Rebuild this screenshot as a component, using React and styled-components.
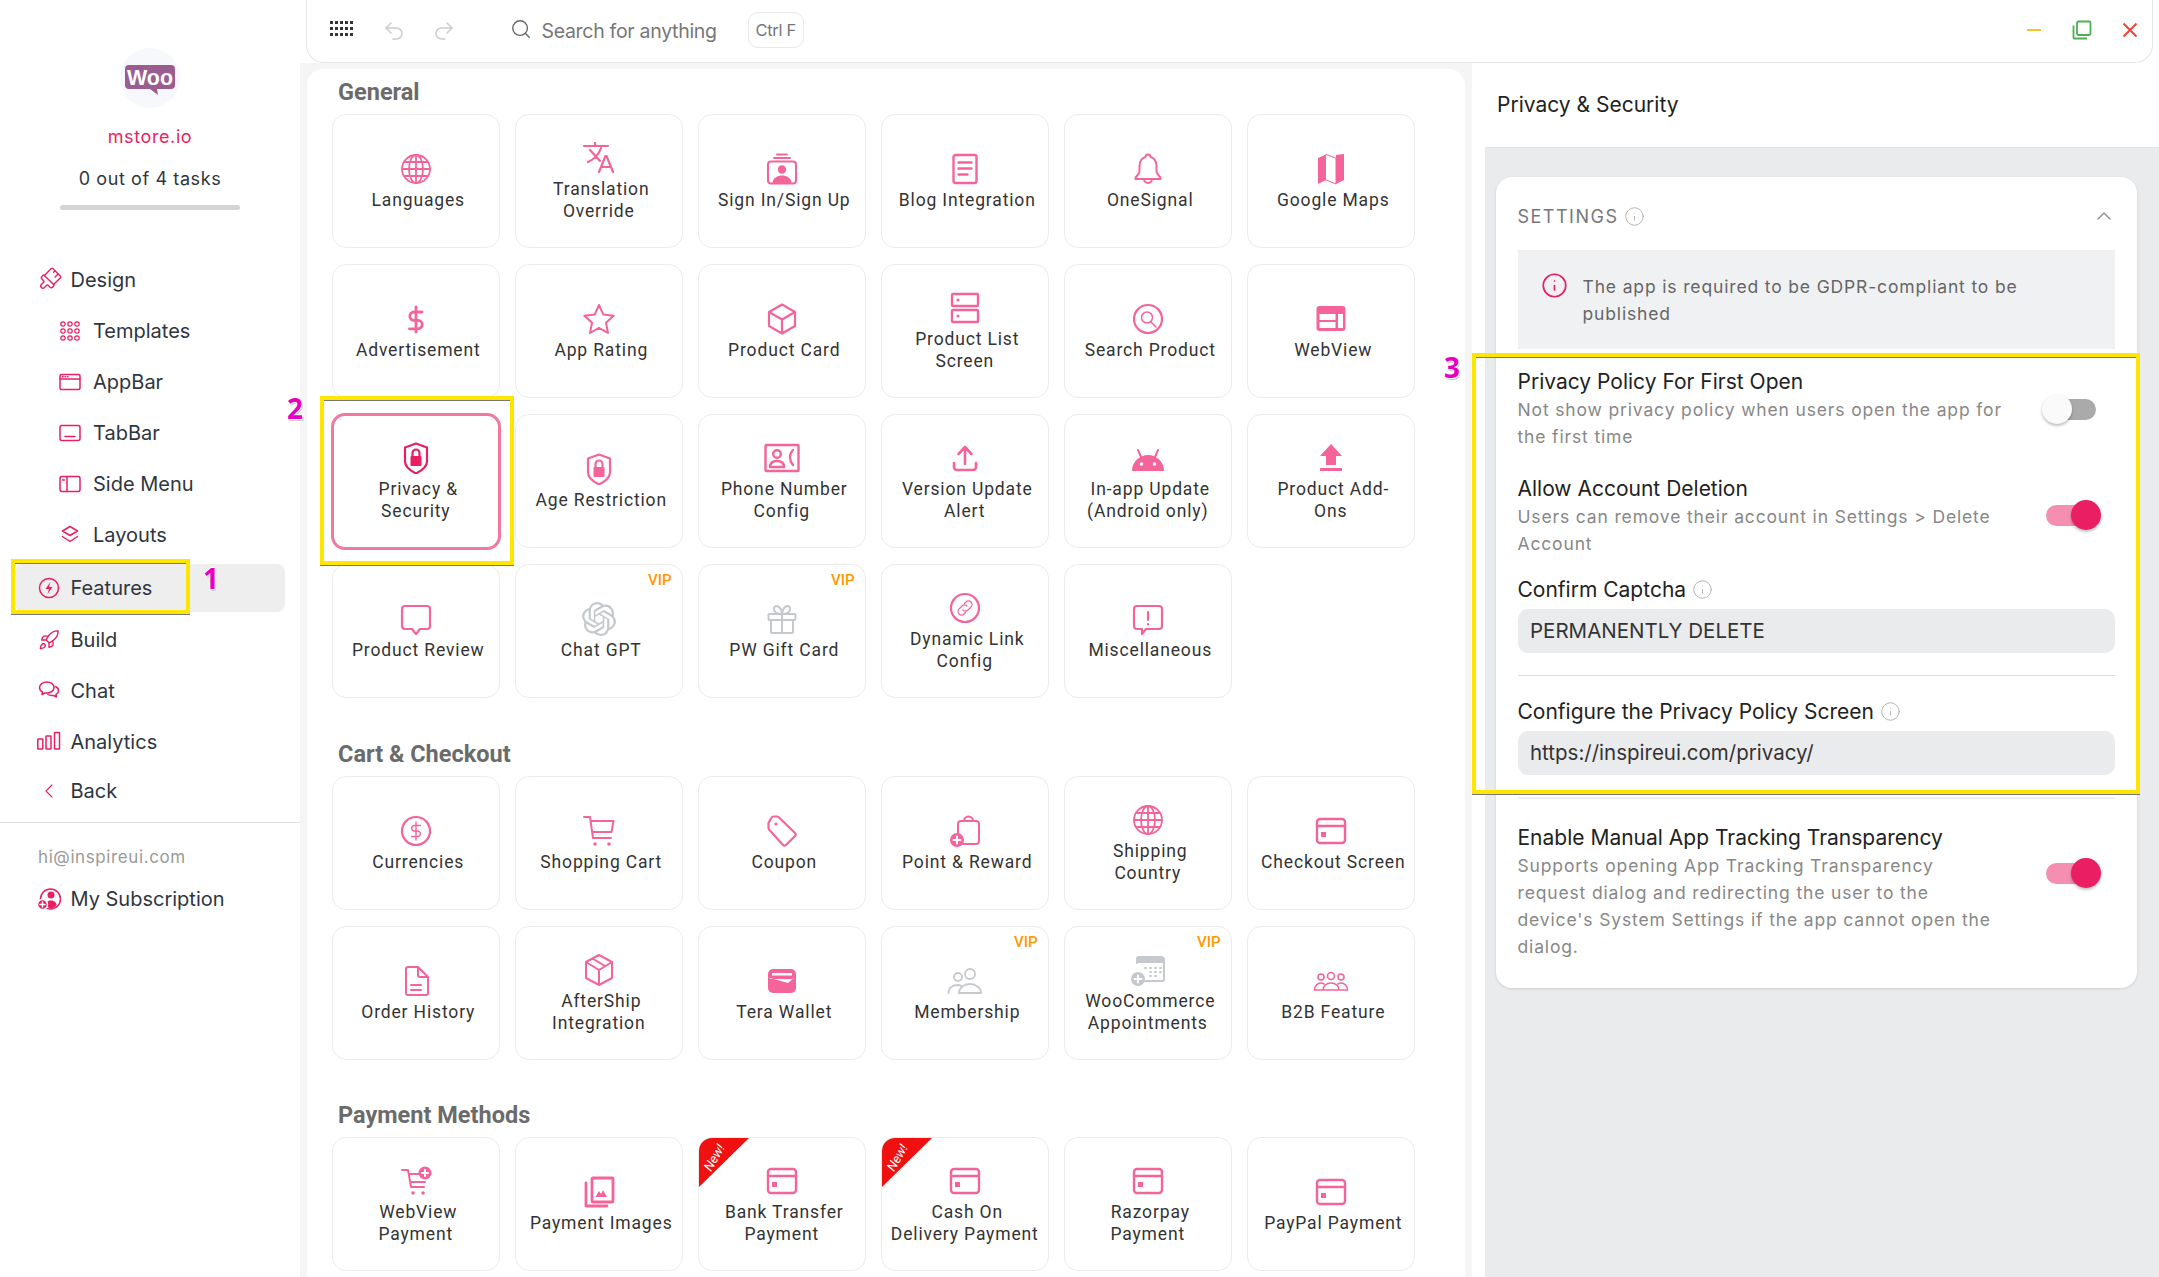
import React from "react";
import styled, { createGlobalStyle } from "styled-components";
import { ChevronLeft, ChevronUp, Info, PaintbrushVertical, Redo2, Rocket, Search, Undo2 } from "lucide-react";
import { SiOpenai } from "react-icons/si";

const GlobalStyle = createGlobalStyle`
  body {
    margin: 0;
    background: #fff;
    font-family: Inter, "Liberation Sans", sans-serif;
  }
`;

const Svg = ({ w = 32, h = 32, sw = 2, children }) => (
  <svg
    width={w}
    height={h}
    viewBox={`0 0 ${w} ${h}`}
    fill="none"
    stroke="currentColor"
    strokeWidth={sw}
    strokeLinecap="round"
    strokeLinejoin="round"
  >
    {children}
  </svg>
);

const F = { fill: "currentColor", stroke: "none" };
const W = { fill: "#fff", stroke: "none" };

const icons = {
  globe: (
    <Svg sw={1.8}>
      <circle cx="16" cy="16" r="14" />
      <ellipse cx="16" cy="16" rx="7" ry="14" />
      <path d="M16 2v28M2 16h28M4.5 9h23M4.5 23h23" />
    </Svg>
  ),
  translate: (
    <Svg sw={2.2}>
      <path d="M1 4h24M12 1v3M7 8l10 11M18 6c-2 6-6 11-13 14M16 30l6.5-16h1L30 30M18.5 25h9" />
    </Svg>
  ),
  signin: (
    <Svg>
      <path d="M11 1.5h10M8 5h16" />
      <rect x="2" y="8.5" width="28" height="22" rx="3" />
      <circle cx="16" cy="16.5" r="4.2" {...F} />
      <path d="M6.5 30c0-5 5-7.5 9.5-7.5s9.5 2.5 9.5 7.5z" {...F} />
    </Svg>
  ),
  blog: (
    <Svg sw={2.4}>
      <rect x="4.5" y="2" width="23" height="28" rx="2" />
      <path d="M9.5 9.5h13M9.5 15.5h13M9.5 21.5h9" />
    </Svg>
  ),
  bell: (
    <Svg sw={2}>
      <path d="M16 1.5a2.5 2.5 0 0 1 2.5 2.5c4 1.2 6 5 6 9v5c0 2.5 2 4.5 4 6.5v1.5h-25V24.500c2-2 4-4 4-6.500v-5c0-4 2-7.800 6-9A2.5 2.5 0 0 1 16 1.500zM12 26a4 4 0 0 0 8 0" />
    </Svg>
  ),
  map: (
    <Svg sw={1}>
      <path d="M3 5l8-3.5V27l-8 4zM21 2l8-1v26l-8 4z" {...F} />
      <path d="M11 1.5L21 5v26L11 27" />
    </Svg>
  ),
  dollar: (
    <Svg sw={2.8}>
      <path d="M16 4v25M22 9h-8a4.2 4.2 0 0 0 0 8.4h4a4.2 4.2 0 0 1 0 8.4H9.5" />
    </Svg>
  ),
  star: (
    <Svg sw={2}>
      <path d="M16 2l4.3 9.600 10.300 1.200-7.600 7L25 30l-9-5.200L7 30l2-10.200-7.600-7 10.300-1.200z" />
    </Svg>
  ),
  cube: (
    <Svg sw={2.2}>
      <path d="M16 1.5l13 7.5v14l-13 7.5L3 23V9zM3 9l13 7.5L29 9M16 16.5v14" />
    </Svg>
  ),
  list: (
    <Svg sw={2.4}>
      <rect x="3" y="2" width="26" height="12" rx="1" />
      <rect x="3" y="18" width="26" height="12" rx="1" />
      <circle cx="9" cy="8" r="1.6" {...F} />
      <circle cx="9" cy="24" r="1.6" {...F} />
    </Svg>
  ),
  searchCircle: (
    <Svg sw={2.2}>
      <circle cx="16" cy="16" r="14" />
      <circle cx="15" cy="14.5" r="5.5" strokeWidth="1.5" />
      <path d="M19 19l5 5" strokeWidth="1.5" />
    </Svg>
  ),
  webview: (
    <Svg>
      <rect x="1.5" y="3" width="29" height="25" rx="3" {...F} />
      <rect x="4.5" y="11" width="16" height="6" {...W} />
      <rect x="4.5" y="19" width="16" height="6" {...W} />
      <rect x="23" y="11" width="5" height="14" {...W} />
    </Svg>
  ),
  shield: (
    <Svg sw={2.2}>
      <path d="M16 1.5l11 4v14c0 5-5 9-11 12-6-3-11-7-11-12v-14z" />
      <path d="M12.5 14v-3a3.5 3.5 0 0 1 7 0v3" />
      <rect x="10.5" y="14" width="11" height="10" rx="1" {...F} />
    </Svg>
  ),
  phone: (
    <Svg w={36} sw={2.4}>
      <rect x="1.5" y="3" width="33" height="26" rx="1" />
      <circle cx="13" cy="12" r="3.8" />
      <path d="M6 25c0-4 3-6 7-6s7 2 7 6z" />
      <path d="M29 8c-4 4-4 10 0 15" />
    </Svg>
  ),
  upload: (
    <Svg sw={2.6}>
      <path d="M16 22V6M9.5 12L16 5l6.5 7M5 21v4a3 3 0 0 0 3 3h16a3 3 0 0 0 3-3v-4" />
    </Svg>
  ),
  android: (
    <Svg w={34} sw={2}>
      <path d="M1 29a16 16 0 0 1 32 0z" {...F} />
      <path d="M10 15L7 8M24 15l3-7" />
      <circle cx="10.5" cy="22" r="1.8" {...W} />
      <circle cx="23.5" cy="22" r="1.8" {...W} />
    </Svg>
  ),
  addon: (
    <Svg>
      <path d="M16 2l11 12h-6v9H11v-9H5z" {...F} />
      <rect x="5" y="26" width="22" height="3" {...F} />
    </Svg>
  ),
  bubble: (
    <Svg sw={2.2}>
      <path d="M5 3h22a3 3 0 0 1 3 3v17a3 3 0 0 1-3 3h-7l-4 5-4-5H5a3 3 0 0 1-3-3V6a3 3 0 0 1 3-3z" />
    </Svg>
  ),
  misc: (
    <Svg sw={2.2}>
      <path d="M5 3h22a3 3 0 0 1 3 3v17a3 3 0 0 1-3 3H14l-4 5v-5H5a3 3 0 0 1-3-3V6a3 3 0 0 1 3-3z" />
      <path d="M16 9v8M16 21v.5" />
    </Svg>
  ),
  gpt: <SiOpenai size={34} />,
  gift: (
    <Svg sw={2}>
      <rect x="2.5" y="11" width="27" height="6" rx="1" />
      <rect x="5" y="17" width="22" height="13" rx="1" />
      <path d="M16 11v19M16 11c-3 0-8-1-8-5 0-5 7-4 8 5 1-9 8-10 8-5 0 4-5 5-8 5z" />
    </Svg>
  ),
  link: (
    <Svg sw={2.2}>
      <circle cx="16" cy="16" r="14" />
      <path
        d="M14 18a3.5 3.5 0 0 0 5 0l3-3a3.5 3.5 0 0 0-5-5l-1.5 1.5M18 14a3.5 3.5 0 0 0-5 0l-3 3a3.5 3.5 0 0 0 5 5l1.5-1.5"
        strokeWidth="1.2"
      />
    </Svg>
  ),
  currency: (
    <Svg sw={2.2}>
      <circle cx="16" cy="16" r="14" />
      <path d="M16 7v18M20.5 10.5H14a2.8 2.8 0 0 0 0 5.5h4a2.8 2.8 0 0 1 0 5.5h-6.5" strokeWidth="1.4" />
    </Svg>
  ),
  cart: (
    <Svg sw={2}>
      <path d="M1 2h6l3 21h18M7.5 6h23l-2 11H9.5" />
      <circle cx="12" cy="29" r="1.8" {...F} />
      <circle cx="26" cy="29" r="1.8" {...F} />
    </Svg>
  ),
  tag: (
    <Svg sw={2.2}>
      <path d="M5 3.5a3 3 0 0 1 3-2h3a3 3 0 0 1 2 1L29 18a2 2 0 0 1 0 3l-9 9a2 2 0 0 1-3 0L3.5 15a3 3 0 0 1-1-2V8z" />
      <circle cx="10" cy="9" r="1.6" {...F} />
    </Svg>
  ),
  bag: (
    <Svg sw={2}>
      <path d="M9 23V9a3 3 0 0 1 3-3h15a3 3 0 0 1 3 3v17a3 3 0 0 1-3 3H14M15 6a4.5 4.5 0 0 1 9 0" />
      <circle cx="8" cy="25" r="7" {...F} />
      <path d="M8 21.5v7M4.5 25h7" stroke="#fff" />
    </Svg>
  ),
  card: (
    <Svg sw={2.4}>
      <rect x="2" y="4" width="28" height="24" rx="3" />
      <path d="M2 11h28" />
      <rect x="6" y="17" width="5" height="5" {...F} />
    </Svg>
  ),
  doc: (
    <Svg sw={2}>
      <path d="M6 4a2 2 0 0 1 2-2h10l10 10v16a2 2 0 0 1-2 2H8a2 2 0 0 1-2-2zM18 2v8a2 2 0 0 0 2 2h8M11 20h10M11 25h10" />
    </Svg>
  ),
  parcel: (
    <Svg sw={2}>
      <path d="M16 1l13 7v16l-13 7-13-7V8zM3 8l13 8 13-8M16 16v15M9.5 4.5L22 12" />
    </Svg>
  ),
  wallet: (
    <Svg>
      <rect x="2" y="4" width="28" height="24" rx="5" {...F} />
      <path d="M6 8h20v2.5H6zM4 13l18 5 6-5v1H4z" {...W} />
    </Svg>
  ),
  members: (
    <Svg w={36} sw={1.8}>
      <circle cx="11" cy="12" r="4" />
      <circle cx="23" cy="9" r="5" />
      <path d="M1.5 28c0-5 4-8 9-8 1.5 0 3 .5 4 1M12 28c0-5 5-9 11-9s11 4 11 9z" />
    </Svg>
  ),
  calendar: (
    <Svg w={36} sw={2}>
      <path d="M8 3h24a3 3 0 0 1 3 3v3H6V5z" {...F} />
      <path d="M7 9V5a2 2 0 0 1 2-2h22a3 3 0 0 1 3 3v19a2 2 0 0 1-2 2H14" />
      <path d="M15 14h1M20 14h1M25 14h1M30 14h1M20 18h1M25 18h1M30 18h1M20 22h1M25 22h1" />
      <circle cx="8" cy="25" r="7" {...F} />
      <path d="M8 21.5v7M4.5 25h7" stroke="#fff" />
    </Svg>
  ),
  b2b: (
    <Svg w={36} sw={1.6}>
      <circle cx="8" cy="12" r="3" />
      <circle cx="18" cy="11" r="3.5" />
      <circle cx="28" cy="12" r="3" />
      <path d="M1.5 25c0-4 3-7 6.5-7 1 0 2 .3 3 1M34.5 25c0-4-3-7-6.5-7-1 0-2 .3-3 1M10 25c0-4 3.5-7 8-7s8 3 8 7zM1.5 25H10M26 25h8.5" />
    </Svg>
  ),
  webCart: (
    <Svg sw={2}>
      <path d="M2 5h6l3 17h13M9 9h14M11 17h14" />
      <circle cx="13" cy="28" r="1.8" {...F} />
      <circle cx="23" cy="28" r="1.8" {...F} />
      <circle cx="25" cy="8" r="6.5" {...F} />
      <path d="M25 5v6M22 8h6" stroke="#fff" />
    </Svg>
  ),
  images: (
    <Svg sw={2.8}>
      <rect x="9" y="2" width="21" height="24" rx="1" />
      <path d="M3 7v23h21" />
      <path d="M12.5 21l3.5-6 2 3 2-4 4 7z" {...F} />
    </Svg>
  ),
};

const sections = [
  {
    title: "General",
    items: [
      { label: "Languages", icon: "globe" },
      { label: "Translation\nOverride", icon: "translate" },
      { label: "Sign In/Sign Up", icon: "signin" },
      { label: "Blog Integration", icon: "blog" },
      { label: "OneSignal", icon: "bell" },
      { label: "Google Maps", icon: "map" },
      { label: "Advertisement", icon: "dollar" },
      { label: "App Rating", icon: "star" },
      { label: "Product Card", icon: "cube" },
      { label: "Product List\nScreen", icon: "list" },
      { label: "Search Product", icon: "searchCircle" },
      { label: "WebView", icon: "webview" },
      { label: "Privacy &\nSecurity", icon: "shield", selected: true },
      { label: "Age Restriction", icon: "shield" },
      { label: "Phone Number\nConfig", icon: "phone" },
      { label: "Version Update\nAlert", icon: "upload" },
      { label: "In-app Update\n(Android only)", icon: "android" },
      { label: "Product Add-\nOns", icon: "addon" },
      { label: "Product Review", icon: "bubble" },
      { label: "Chat GPT", icon: "gpt", vip: true },
      { label: "PW Gift Card", icon: "gift", vip: true },
      { label: "Dynamic Link\nConfig", icon: "link" },
      { label: "Miscellaneous", icon: "misc" },
    ],
  },
  {
    title: "Cart & Checkout",
    items: [
      { label: "Currencies", icon: "currency" },
      { label: "Shopping Cart", icon: "cart" },
      { label: "Coupon", icon: "tag" },
      { label: "Point & Reward", icon: "bag" },
      { label: "Shipping\nCountry", icon: "globe" },
      { label: "Checkout Screen", icon: "card" },
      { label: "Order History", icon: "doc" },
      { label: "AfterShip\nIntegration", icon: "parcel" },
      { label: "Tera Wallet", icon: "wallet" },
      { label: "Membership", icon: "members", vip: true },
      { label: "WooCommerce\nAppointments", icon: "calendar", vip: true },
      { label: "B2B Feature", icon: "b2b" },
    ],
  },
  {
    title: "Payment Methods",
    items: [
      { label: "WebView\nPayment", icon: "webCart" },
      { label: "Payment Images", icon: "images" },
      { label: "Bank Transfer\nPayment", icon: "card", isNew: true },
      { label: "Cash On\nDelivery Payment", icon: "card", isNew: true },
      { label: "Razorpay\nPayment", icon: "card" },
      { label: "PayPal Payment", icon: "card" },
    ],
  },
];

const NavSvg = ({ children }) => (
  <svg width="24" height="24" viewBox="0 0 24 24" fill="none" stroke="currentColor" strokeWidth="1.5" strokeLinecap="round" strokeLinejoin="round">
    {children}
  </svg>
);

function BrushIcon() {
  return (
    <BrushTilt>
      <PaintbrushVertical size={26} strokeWidth={1.3} />
    </BrushTilt>
  );
}

const navItems = [
  { label: "Design", icon: <BrushIcon /> },
  {
    label: "Templates",
    sub: true,
    icon: (
      <NavSvg>
        {[5, 12, 19].map((y) =>
          [5, 12, 19].map((x) => <circle key={`${x}-${y}`} cx={x} cy={y} r="2.2" strokeWidth="1.2" />)
        )}
      </NavSvg>
    ),
  },
  {
    label: "AppBar",
    sub: true,
    icon: (
      <NavSvg>
        <rect x="2" y="4.5" width="20" height="15" rx="1.5" />
        <path d="M2 9h20M4.5 6.8h.5M7 6.8h.5M9.5 6.8h.5" />
      </NavSvg>
    ),
  },
  {
    label: "TabBar",
    sub: true,
    icon: (
      <NavSvg>
        <rect x="2" y="4.5" width="20" height="15" rx="2" />
        <path d="M7 15.5h10" />
      </NavSvg>
    ),
  },
  {
    label: "Side Menu",
    sub: true,
    icon: (
      <NavSvg>
        <rect x="2" y="4.5" width="20" height="15" rx="2" />
        <path d="M9 4.5v15M4.5 8h2" />
      </NavSvg>
    ),
  },
  {
    label: "Layouts",
    sub: true,
    icon: (
      <NavSvg>
        <path d="M12 3.5l7.5 4.5-7.5 4.5L4.5 8zM4.5 13.5l7.5 5 7.5-5" />
      </NavSvg>
    ),
  },
  {
    label: "Features",
    active: true,
    top: 4,
    icon: (
      <NavSvg>
        <circle cx="12" cy="12" r="9.5" />
        <path d="M13.5 6l-5 7h3.5l-1.5 5 5-7h-3.5z" fill="currentColor" stroke="none" />
      </NavSvg>
    ),
  },
  { label: "Build", icon: <Rocket size={22} strokeWidth={1.5} /> },
  {
    label: "Chat",
    icon: (
      <NavSvg>
        <path d="M10 3c4 0 7 2.5 7 5.5S14 14 10 14H8l-3 1.5.5-2.5C3.500 12 2.500 10.500 2.500 8.500 2.500 5.500 6 3 10 3zM18.500 7.500c2 1 3 2.500 3 4 0 1.500-.7 3-2.500 4l.5 2.500-3-1.500h-2c-1.500 0-2.500-.3-3.500-1" />
      </NavSvg>
    ),
  },
  {
    label: "Analytics",
    icon: (
      <NavSvg>
        <rect x="0.8" y="9" width="5" height="10" rx="0.5" />
        <rect x="9" y="6" width="5" height="13" rx="0.5" />
        <rect x="17.5" y="2.5" width="5" height="16.5" rx="0.5" />
      </NavSvg>
    ),
  },
  { label: "Back", height: 47, icon: <ChevronLeft size={34} strokeWidth={1.1} /> },
];

const toggleRows = [
  {
    title: "Privacy Policy For First Open",
    desc: "Not show privacy policy when users open the app for\nthe first time",
    on: false,
    offset: 25,
  },
  {
    title: "Allow Account Deletion",
    desc: "Users can remove their account in Settings > Delete\nAccount",
    on: true,
    offset: 24,
  },
];

const Tile = ({ item }) => (
  <Card $selected={item.selected}>
    {item.vip && <Vip>VIP</Vip>}
    {item.isNew && (
      <Ribbon>
        <RibbonText>New!</RibbonText>
      </Ribbon>
    )}
    <TileIcon $tone={item.selected ? "strong" : item.vip ? "muted" : "soft"}>{icons[item.icon]}</TileIcon>
    <TileLabel>{item.label}</TileLabel>
  </Card>
);

const ToggleRow = ({ row }) => (
  <Row>
    <div>
      <FieldTitle>{row.title}</FieldTitle>
      <FieldDesc>{row.desc}</FieldDesc>
    </div>
    <Toggle $on={row.on} $offset={row.offset}>
      <Thumb $on={row.on} />
    </Toggle>
  </Row>
);

const App = () => {
  return (
    <Page>
      <GlobalStyle />
      <Sidebar>
        <LogoCircle>
          <svg width="50" height="30" viewBox="0 0 50 30">
            <path d="M4 0h42a4 4 0 0 1 4 4v16a4 4 0 0 1-4 4H32l1 6-8-6H4a4 4 0 0 1-4-4V4a4 4 0 0 1 4-4z" fill="#9b5c8f" />
            <text x="25" y="20" textAnchor="middle" fontFamily="Liberation Sans" fontWeight="700" fontSize="22" fill="#fff" textLength="46" lengthAdjust="spacingAndGlyphs">
              Woo
            </text>
          </svg>
        </LogoCircle>
        <StoreName>mstore.io</StoreName>
        <Tasks>0 out of 4 tasks</Tasks>
        <Progress />
        <Nav>
          {navItems.map((item) => (
            <NavRow key={item.label} $sub={item.sub} $active={item.active} $top={item.top} $height={item.height}>
              <NavIcon>{item.icon}</NavIcon>
              {item.label}
            </NavRow>
          ))}
        </Nav>
        <SideDivider />
        <Email>hi@inspireui.com</Email>
        <NavRow>
          <NavIcon>
            <NavSvg>
              <circle cx="13.5" cy="12" r="10" />
              <circle cx="14" cy="8" r="3.5" fill="currentColor" stroke="none" />
              <path d="M8.5 19c0-3.500 2.500-5.500 5.500-5.500s5.500 2 5.500 4.500c-1.500 1.800-3.500 3.500-6 3.500z" fill="currentColor" stroke="none" />
              <circle cx="5.5" cy="17.5" r="5" fill="currentColor" stroke="#fff" />
              <path d="M5.5 15v5M3 17.5h5" stroke="#fff" />
            </NavSvg>
          </NavIcon>
          My Subscription
        </NavRow>
      </Sidebar>

      <Column>
        <Topbar>
          <AppsGrid>
            {Array.from({ length: 15 }, (_, i) => (
              <AppsDot key={i} />
            ))}
          </AppsGrid>
          <HistoryButton $left={29}>
            <Undo2 size={24} strokeWidth={1.5} />
          </HistoryButton>
          <HistoryButton $left={26}>
            <Redo2 size={24} strokeWidth={1.5} />
          </HistoryButton>
          <SearchIcon>
            <Search size={22} strokeWidth={1.5} />
          </SearchIcon>
          <SearchText>Search for anything</SearchText>
          <Shortcut>Ctrl F</Shortcut>
          <WindowControls>
            <WindowButton $color="#fbc02d">
              <svg width="16" height="16" viewBox="0 0 16 16" fill="none" stroke="currentColor" strokeWidth="2">
                <path d="M1 8h14" />
              </svg>
            </WindowButton>
            <WindowButton $color="#4caf50">
              <svg width="20" height="20" viewBox="0 0 20 20" fill="none" stroke="currentColor" strokeWidth="1.8">
                <rect x="5" y="1.5" width="13.5" height="13.5" rx="1.5" />
                <path d="M1.5 5.5v12a1 1 0 0 0 1 1H15" />
              </svg>
            </WindowButton>
            <WindowButton $color="#f44336">
              <svg width="16" height="16" viewBox="0 0 16 16" fill="none" stroke="currentColor" strokeWidth="2">
                <path d="M1.5 1.5l13 13M14.5 1.5l-13 13" />
              </svg>
            </WindowButton>
          </WindowControls>
        </Topbar>

        <Workspace>
          <MainPanel>
            {sections.map((section, i) => (
              <Section key={section.title} $first={i === 0}>
                <SectionTitle>{section.title}</SectionTitle>
                <TileGrid>
                  {section.items.map((item) => (
                    <Tile key={item.label} item={item} />
                  ))}
                </TileGrid>
              </Section>
            ))}
          </MainPanel>

          <DetailPanel>
            <DetailHeader>Privacy &amp; Security</DetailHeader>
            <DetailBody>
              <SettingsCard>
                <SettingsHead>
                  <SettingsTitle>SETTINGS</SettingsTitle>
                  <InfoMark>
                    <Info size={21} strokeWidth={1} />
                  </InfoMark>
                  <Collapse>
                    <ChevronUp size={24} strokeWidth={1.3} />
                  </Collapse>
                </SettingsHead>
                <Notice>
                  <NoticeIcon>
                    <Info size={27} strokeWidth={1.5} />
                  </NoticeIcon>
                  <NoticeText>The app is required to be GDPR-compliant to be{"\n"}published</NoticeText>
                </Notice>
                <ToggleList>
                  {toggleRows.map((row) => (
                    <ToggleRow key={row.title} row={row} />
                  ))}
                </ToggleList>
                <FieldLabel $top={18.5}>
                  Confirm Captcha
                  <InfoMark>
                    <Info size={21} strokeWidth={1} />
                  </InfoMark>
                </FieldLabel>
                <InputBox>PERMANENTLY DELETE</InputBox>
                <Rule />
                <FieldLabel $top={22}>
                  Configure the Privacy Policy Screen
                  <InfoMark>
                    <Info size={21} strokeWidth={1} />
                  </InfoMark>
                </FieldLabel>
                <InputBox>https://inspireui.com/privacy/</InputBox>
                <Rule $thick />
                <LastRow>
                  <ToggleRow
                    row={{
                      title: "Enable Manual App Tracking Transparency",
                      desc: "Supports opening App Tracking Transparency\nrequest dialog and redirecting the user to the\ndevice's System Settings if the app cannot open the\ndialog.",
                      on: true,
                      offset: 33,
                    }}
                  />
                </LastRow>
              </SettingsCard>
            </DetailBody>
          </DetailPanel>
        </Workspace>
      </Column>

      <Highlight $x={11} $y={559} $w={179} $h={55} />
      <Highlight $x={320} $y={396} $w={194} $h={169} />
      <Highlight $x={1472} $y={353} $w={668} $h={441} />
      <Marker $x={203} $y={559}>1</Marker>
      <Marker $x={287} $y={389}>2</Marker>
      <Marker $x={1444} $y={348}>3</Marker>
    </Page>
  );
};

export default App;

const BrushTilt = styled.span`
  display: flex;
  transform: rotate(45deg);
`;

const Page = styled.div`
  position: relative;
  display: flex;
  width: 2159px;
  height: 1277px;
  overflow: hidden;
  background: #fff;
`;

const Sidebar = styled.aside`
  flex: none;
  width: 300px;
  padding-top: 48px;
  box-sizing: border-box;
  color: #2f3640;
`;

const LogoCircle = styled.div`
  width: 60px;
  height: 60px;
  margin: 0 auto;
  padding-top: 17px;
  box-sizing: border-box;
  border-radius: 50%;
  background: #f7f8fc;
  display: flex;
  justify-content: center;
`;

const StoreName = styled.div`
  margin-top: 16px;
  height: 26px;
  line-height: 26px;
  text-align: center;
  font-size: 18px;
  letter-spacing: 0.6px;
  color: #e91e63;
`;

const Tasks = styled.div`
  margin-top: 16px;
  height: 26px;
  line-height: 26px;
  text-align: center;
  font-size: 18px;
  letter-spacing: 0.6px;
`;

const Progress = styled.div`
  width: 180px;
  height: 5px;
  margin: 13px auto 0;
  border-radius: 3px;
  background: #d4d4d4;
`;

const Nav = styled.nav`
  margin-top: 44px;
`;

const NavRow = styled.div`
  display: flex;
  align-items: center;
  height: ${(p) => (p.$active ? 48 : p.$height || 51)}px;
  margin: ${(p) => p.$top || 0}px 15px ${(p) => (p.$active ? 2 : 0)}px;
  padding-left: ${(p) => (p.$sub ? 43 : 22)}px;
  gap: ${(p) => (p.$sub ? 11 : 9.5)}px;
  border-radius: 8px;
  background: ${(p) => (p.$active ? "#eeeeee" : "transparent")};
  font-size: 20px;
  color: #2f3640;
`;

const NavIcon = styled.span`
  display: flex;
  justify-content: center;
  width: 24px;
  color: #e91e63;
`;

const SideDivider = styled.div`
  height: 1px;
  margin-top: 8px;
  background: #e2e2e2;
`;

const Email = styled.div`
  margin: 22px 0 4px 38px;
  height: 24px;
  line-height: 24px;
  font-size: 17px;
  letter-spacing: 0.6px;
  color: #9a9a9a;
`;

const Column = styled.div`
  flex: 1;
  display: flex;
  flex-direction: column;
  min-width: 0;
`;

const Topbar = styled.header`
  flex: none;
  display: flex;
  align-items: center;
  height: 63px;
  margin: 0 6px;
  padding-left: 23px;
  box-sizing: border-box;
  background: #fff;
  border: 1px solid #e6e6e6;
  border-top: none;
  border-radius: 0 0 18px 18px;
`;

const AppsGrid = styled.div`
  display: grid;
  grid-template-columns: repeat(5, 3px);
  grid-auto-rows: 3px;
  gap: 3px 2px;
  margin-top: -5px;
`;

const AppsDot = styled.span`
  background: #333;
`;

const HistoryButton = styled.span`
  display: flex;
  margin-left: ${(p) => p.$left}px;
  color: #ccc;
`;

const SearchIcon = styled.span`
  display: flex;
  margin-left: 53.5px;
  margin-top: -5px;
  color: #666;
`;

const SearchText = styled.span`
  margin-left: 10px;
  font-size: 19.5px;
  letter-spacing: -0.3px;
  color: #777;
`;

const Shortcut = styled.span`
  margin-left: 31px;
  width: 56px;
  height: 36px;
  line-height: 34px;
  margin-top: -3px;
  box-sizing: border-box;
  text-align: center;
  border: 1px solid #e8e8e8;
  border-radius: 10px;
  font-size: 16.5px;
  letter-spacing: -0.3px;
  color: #777;
`;

const WindowControls = styled.div`
  display: flex;
  align-items: center;
  gap: 30px;
  margin-left: auto;
  margin-right: 14px;
  margin-top: -3px;
`;

const WindowButton = styled.span`
  display: flex;
  color: ${(p) => p.$color};
`;

const Workspace = styled.div`
  flex: 1;
  display: flex;
  min-height: 0;
  background: #f5f5f5;
`;

const MainPanel = styled.main`
  flex: none;
  width: 1158px;
  margin: 6px 7px 0;
  padding: 11px 0 0 25px;
  box-sizing: border-box;
  background: #fff;
  border-radius: 16px 16px 0 0;
`;

const Section = styled.section`
  margin-top: ${(p) => (p.$first ? 0 : 43.5)}px;
`;

const SectionTitle = styled.h2`
  margin: 0 0 10px 6px;
  height: 24px;
  line-height: 24px;
  font-family: Roboto, sans-serif;
  font-size: 23.5px;
  font-weight: 700;
  color: #6b6b6b;
`;

const TileGrid = styled.div`
  display: grid;
  grid-template-columns: repeat(6, 167.5px);
  grid-auto-rows: 134px;
  gap: 16px 15.5px;
`;

const Card = styled.div`
  position: relative;
  display: flex;
  flex-direction: column;
  align-items: center;
  justify-content: center;
  padding-top: 3px;
  box-sizing: border-box;
  overflow: hidden;
  background: #fff;
  margin: ${(p) => (p.$selected ? "-1.5px" : "0")};
  border: ${(p) => (p.$selected ? "3px solid #f2789f" : "1px solid #ececec")};
  border-radius: 14px;
`;

const Vip = styled.span`
  position: absolute;
  top: 6px;
  right: 10px;
  font-family: Roboto, sans-serif;
  font-size: 15px;
  font-weight: 500;
  color: #ff9800;
`;

const Ribbon = styled.div`
  position: absolute;
  top: 0;
  left: 0;
  width: 50px;
  height: 49px;
  background: #f01010;
  clip-path: polygon(0 0, 100% 0, 0 100%);
`;

const RibbonText = styled.span`
  position: absolute;
  top: 12px;
  left: 1px;
  transform: rotate(-60deg);
  font-family: Roboto, sans-serif;
  font-size: 13px;
  font-style: italic;
  color: #fff;
`;

const TileIcon = styled.div`
  display: flex;
  align-items: center;
  justify-content: center;
  height: 30px;
  margin-bottom: 5px;
  color: ${(p) => (p.$tone === "strong" ? "#e91e63" : p.$tone === "muted" ? "#c5c8cc" : "#f4649a")};
`;

const TileLabel = styled.div`
  width: 100%;
  text-align: center;
  white-space: pre-line;
  text-indent: 5px;
  font-family: Roboto, sans-serif;
  font-size: 17.5px;
  line-height: 22px;
  letter-spacing: 0.85px;
  color: #333;
`;

const DetailPanel = styled.aside`
  flex: none;
  width: 687px;
  display: flex;
  flex-direction: column;
  background: #fff;
`;

const DetailHeader = styled.div`
  flex: none;
  height: 84px;
  line-height: 84px;
  padding-left: 25px;
  font-size: 21px;
  color: #222;
`;

const DetailBody = styled.div`
  flex: 1;
  margin-left: 13px;
  padding: 28.5px 0 0 10.5px;
  background: #eaebed;
  border-top: 1px solid #e2e3e5;
`;

const SettingsCard = styled.div`
  width: 641.5px;
  height: 811.5px;
  padding: 0 22px;
  box-sizing: border-box;
  background: #fff;
  border-radius: 16px;
  box-shadow: 0 1px 3px rgba(0, 0, 0, 0.12);
`;

const SettingsHead = styled.div`
  display: flex;
  align-items: center;
  height: 73.5px;
  padding-top: 6px;
  box-sizing: border-box;
`;

const SettingsTitle = styled.span`
  font-size: 18px;
  letter-spacing: 1.5px;
  color: #777;
`;

const InfoMark = styled.span`
  display: flex;
  margin-left: 6px;
  color: #aaa;
`;

const Collapse = styled.span`
  display: flex;
  margin-left: auto;
  margin-right: -1px;
  color: #888;
`;

const Notice = styled.div`
  display: flex;
  height: 99px;
  padding: 22px 0 0 23px;
  box-sizing: border-box;
  background: #f0f1f3;
`;

const NoticeIcon = styled.span`
  display: flex;
  height: 27px;
  color: #e91e63;
`;

const NoticeText = styled.div`
  margin: 1px 0 0 15px;
  white-space: pre-line;
  font-size: 17.5px;
  line-height: 27px;
  letter-spacing: 0.85px;
  color: #666;
`;

const ToggleList = styled.div`
  display: flex;
  flex-direction: column;
  gap: 25.5px;
  margin-top: 20px;
`;

const Row = styled.div`
  display: flex;
  justify-content: space-between;
  align-items: flex-start;
`;

const FieldTitle = styled.div`
  height: 26px;
  line-height: 26px;
  font-size: 21px;
  color: #222;
`;

const FieldDesc = styled.div`
  margin-top: 0.5px;
  margin-bottom: 1px;
  white-space: pre-line;
  font-size: 17.5px;
  line-height: 27px;
  letter-spacing: 0.85px;
  color: #888;
`;

const Toggle = styled.div`
  position: relative;
  flex: none;
  width: 50px;
  height: 21px;
  margin: ${(p) => p.$offset + 4.5}px 19px 0 0;
  border-radius: 11px;
  background: ${(p) => (p.$on ? "#f48fb1" : "#aaaaaa")};
`;

const Thumb = styled.span`
  position: absolute;
  top: -4.5px;
  ${(p) => (p.$on ? "right: -5px;" : "left: -4px;")}
  width: 30px;
  height: 30px;
  border-radius: 50%;
  background: ${(p) => (p.$on ? "#e91e63" : "#fafafa")};
  box-shadow: 0 2px 3px rgba(0, 0, 0, 0.25);
`;

const FieldLabel = styled.div`
  display: flex;
  align-items: center;
  height: 26px;
  margin-top: ${(p) => p.$top}px;
  font-size: 21px;
  color: #222;
`;

const InputBox = styled.div`
  height: 44px;
  line-height: 44px;
  margin-top: 7px;
  padding-left: 12.5px;
  border-radius: 10px;
  background: #eaebed;
  font-size: 20.5px;
  color: #333;
`;

const Rule = styled.div`
  height: ${(p) => (p.$thick ? 2 : 1)}px;
  margin-top: 22px;
  background: ${(p) => (p.$thick ? "#efefef" : "#dddddd")};
`;

const LastRow = styled.div`
  margin-top: 26px;
`;

const Highlight = styled.div`
  position: absolute;
  left: ${(p) => p.$x}px;
  top: ${(p) => p.$y}px;
  width: ${(p) => p.$w}px;
  height: ${(p) => p.$h}px;
  box-sizing: border-box;
  border: 4px solid #ffe600;
  box-shadow: 0 1px 0 #777, inset 0 1px 0 #777;
  pointer-events: none;
`;

const Marker = styled.span`
  position: absolute;
  left: ${(p) => p.$x}px;
  top: ${(p) => p.$y}px;
  font-family: "Open Sans", sans-serif;
  font-size: 28px;
  font-weight: 700;
  color: #e600c3;
  text-shadow: -1px 0 0 #fff, 1px 0 0 #fff, 0 -1px 0 #fff, 0 1px 0 #fff, 1px 2px 0 #ccc;
`;
